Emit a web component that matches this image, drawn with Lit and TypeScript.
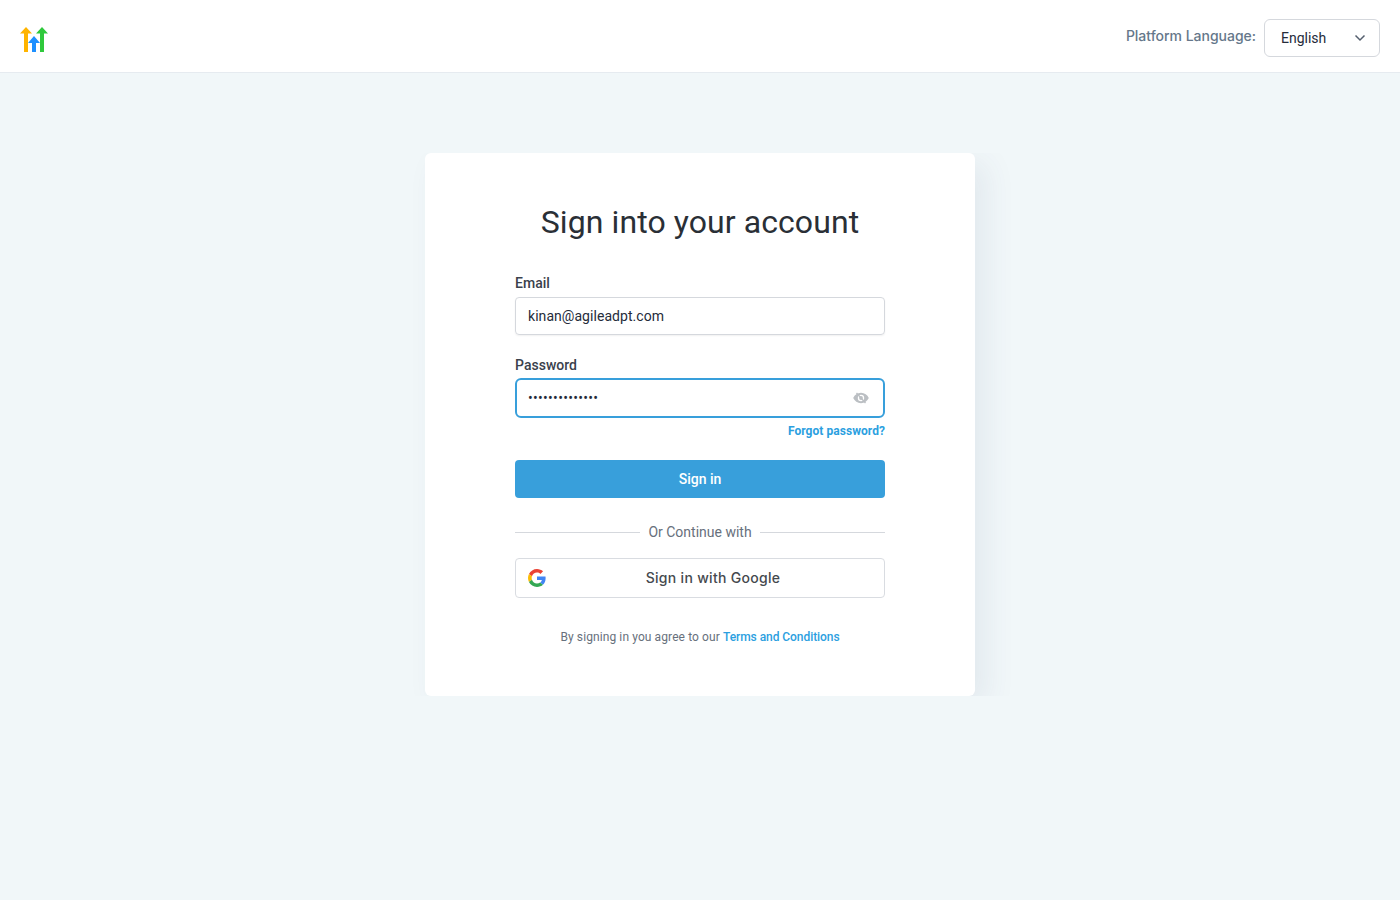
import { LitElement, html, css } from 'lit';
import { customElement } from 'lit/decorators.js';

// Top bar with logo and language picker
@customElement('top-bar')
export class TopBar extends LitElement {
  static styles = css`
    :host {
      display: flex;
      align-items: center;
      justify-content: space-between;
      height: 73px;
      box-sizing: border-box;
      padding: 0 20px;
      background: #fff;
      border-bottom: 1px solid #e6ebf0;
    }
    .logo { display: block; margin-top: 7px; }
    .lang { display: flex; align-items: center; gap: 8px; margin-top: 4px; }
    .lang-label {
      font: 500 14px/20px Inter, sans-serif;
      letter-spacing: -0.02px;
      color: #65778a;
      margin-top: -4px;
    }
    .select {
      display: flex;
      align-items: center;
      justify-content: space-between;
      box-sizing: border-box;
      width: 116px;
      height: 38px;
      padding: 0 13px 0 16px;
      border: 1px solid #d5d8dd;
      border-radius: 6px;
      font: 400 14px/20px Roboto, sans-serif;
      color: #252b3a;
    }
  `;

  render() {
    return html`
      <svg class="logo" width="28" height="25" viewBox="0 0 28 25">
        <path fill="#ffb400" d="M6 0 L12 6.5 H8 V25 H4 V6.5 H0 Z" />
        <path fill="#2fc93c" d="M22 0 L28 6.5 H24 V25 H20 V6.5 H16 Z" />
        <path fill="#1e90ff" d="M14 9 L20 16 H16 V25 H12 V16 H8 Z" />
      </svg>
      <div class="lang">
        <span class="lang-label">Platform Language:</span>
        <div class="select">
          English
          <svg width="12" height="8" viewBox="0 0 12 8" fill="none">
            <path d="M1.5 1.5 L6 6 L10.5 1.5" stroke="#555f6e" stroke-width="1.5" />
          </svg>
        </div>
      </div>
    `;
  }
}

// Sign in card
@customElement('login-card')
export class LoginCard extends LitElement {
  static styles = css`
    :host {
      display: block;
      box-sizing: border-box;
      width: 550px;
      height: 543px;
      padding: 49px 90px 0;
      background: #fff;
      border-radius: 6px;
      box-shadow: 12px 10px 30px rgba(60, 80, 110, 0.08);
      font-family: Roboto, sans-serif;
    }
    h1 {
      margin: 0 0 31px;
      font: 400 32px/40px Roboto, sans-serif;
      letter-spacing: 0.08px;
      text-align: center;
      color: #2a2f36;
    }
    label {
      display: block;
      font: 500 14px/20px Roboto, sans-serif;
      letter-spacing: 0.02px;
      color: #3a414c;
      margin-bottom: 4px;
    }
    label.tight { margin-bottom: 3px; }
    .input {
      display: flex;
      align-items: center;
      justify-content: space-between;
      box-sizing: border-box;
      height: 38px;
      padding: 0 12px;
      border: 1px solid #d5d8dd;
      border-radius: 4px;
      box-shadow: 0 1px 2px rgba(0, 0, 0, 0.06);
      font: 400 14px/20px Roboto, sans-serif;
      letter-spacing: 0.05px;
      color: #252b3a;
      margin-bottom: 20px;
    }
    .input.focus {
      height: 40px;
      border: 2px solid #389fdb;
      border-radius: 6px;
      padding: 0 14px 0 11px;
      box-shadow: none;
      margin-bottom: 0;
    }
    .dots { font-size: 14px; letter-spacing: 0.3px; line-height: 20px; color: #252b3a; }
    .forgot {
      display: block;
      margin: 5px 0 21px;
      text-align: right;
      font: 700 12px/16px Roboto, sans-serif;
      letter-spacing: 0.05px;
      color: #2c9fdf;
    }
    .primary {
      display: flex;
      align-items: center;
      justify-content: center;
      height: 38px;
      background: #389fdb;
      border-radius: 4px;
      color: #fff;
      font: 500 14px/20px Roboto, sans-serif;
    }
    .divider {
      display: flex;
      align-items: center;
      gap: 8px;
      margin: 24px 0 16px;
      font: 400 14px/20px Roboto, sans-serif;
      color: #67707c;
    }
    .divider::before, .divider::after {
      content: '';
      flex: 1;
      height: 1px;
      background: #d5d8dd;
    }
    .google {
      position: relative;
      display: flex;
      align-items: center;
      justify-content: center;
      box-sizing: border-box;
      height: 40px;
      padding-left: 26px;
      border: 1px solid #d9dce1;
      border-radius: 4px;
      font: 500 14px/20px Inter, sans-serif;
      letter-spacing: 0.3px;
      color: #45494e;
    }
    .google svg { position: absolute; left: 12px; top: 10px; }
    .terms {
      margin-top: 31px;
      text-align: center;
      font: 400 12px/16px Roboto, sans-serif;
      letter-spacing: 0.1px;
      color: #67707c;
    }
    .terms a { font-weight: 500; letter-spacing: -0.06px; color: #2c9fdf; }
  `;

  render() {
    return html`
      <h1>Sign into your account</h1>
      <label>Email</label>
      <div class="input">kinan@agileadpt.com</div>
      <label class="tight">Password</label>
      <div class="input focus">
        <span class="dots">••••••••••••••</span>
        <svg width="16" height="14" viewBox="0 0 16 14">
          <path fill="#bbbfc3" fill-rule="evenodd" d="M8 1.8C4.5 1.8 1.6 3.9 0.2 7 1.6 10.1 4.5 12.2 8 12.2s6.4-2.1 7.8-5.2C14.4 3.9 11.5 1.8 8 1.8Zm0 2a3.2 3.2 0 1 1 0 6.4 3.2 3.2 0 0 1 0-6.4Z" />
          <circle cx="8" cy="7" r="1.9" fill="#bbbfc3" />
          <path d="M3.5 2 L12.5 12" stroke="#bbbfc3" stroke-width="1.3" />
        </svg>
      </div>
      <a class="forgot">Forgot password?</a>
      <div class="primary">Sign in</div>
      <div class="divider">Or Continue with</div>
      <div class="google">
        <svg width="18" height="18" viewBox="0 0 48 48">
          <path fill="#EA4335" d="M24 9.5c3.54 0 6.71 1.22 9.21 3.6l6.85-6.85C35.9 2.38 30.47 0 24 0 14.62 0 6.51 5.38 2.56 13.22l7.98 6.19C12.43 13.72 17.74 9.5 24 9.5z" />
          <path fill="#4285F4" d="M46.98 24.55c0-1.57-.15-3.09-.38-4.55H24v9.02h12.94c-.58 2.96-2.26 5.48-4.78 7.18l7.73 6c4.51-4.18 7.09-10.36 7.09-17.65z" />
          <path fill="#FBBC05" d="M10.53 28.59c-.48-1.45-.76-2.99-.76-4.59s.27-3.14.76-4.59l-7.98-6.19C.92 16.46 0 20.12 0 24c0 3.88.92 7.54 2.56 10.78l7.97-6.19z" />
          <path fill="#34A853" d="M24 48c6.48 0 11.93-2.13 15.89-5.81l-7.73-6c-2.15 1.45-4.92 2.3-8.16 2.3-6.26 0-11.57-4.22-13.47-9.91l-7.98 6.19C6.51 42.62 14.62 48 24 48z" />
        </svg>
        Sign in with Google
      </div>
      <div class="terms">By signing in you agree to our <a>Terms and Conditions</a></div>
    `;
  }
}

@customElement('app-root')
export class AppRoot extends LitElement {
  static styles = css`
    :host {
      display: block;
      min-height: 900px;
      background: #f1f7f9;
    }
    .stage {
      display: flex;
      justify-content: center;
      margin-top: 80px;
      overflow: hidden;
    }
  `;

  render() {
    return html`
      <top-bar></top-bar>
      <div class="stage"><login-card></login-card></div>
    `;
  }
}
